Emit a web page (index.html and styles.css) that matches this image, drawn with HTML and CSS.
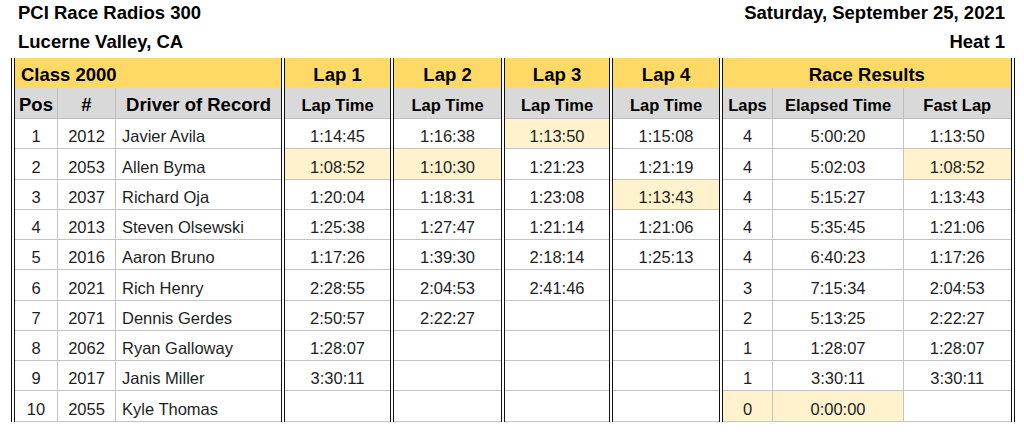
FILE: index.html
```html
<!DOCTYPE html>
<html lang="en">
<head>
<meta charset="utf-8">
<title>PCI Race Radios 300 - Heat 1</title>
<link rel="stylesheet" href="styles.css">
</head>
<body>
<header class="meta">
  <div class="meta-row"><span>PCI Race Radios 300</span><span>Saturday, September 25, 2021</span></div>
  <div class="meta-row second"><span>Lucerne Valley, CA</span><span>Heat 1</span></div>
</header>
<table class="results">
  <colgroup>
    <col class="c-pos"><col class="c-num"><col class="c-driver">
    <col class="c-lap1"><col class="c-lap2"><col class="c-lap3"><col class="c-lap4">
    <col class="c-laps"><col class="c-elapsed"><col class="c-fast">
  </colgroup>
  <thead>
    <tr class="group">
      <th colspan="3" class="left grp-end">Class 2000</th>
      <th class="grp-end">Lap 1</th>
      <th class="grp-end">Lap 2</th>
      <th class="grp-end">Lap 3</th>
      <th class="grp-end">Lap 4</th>
      <th colspan="3">Race Results</th>
    </tr>
    <tr class="sub">
      <th class="big">Pos</th>
      <th class="big">#</th>
      <th class="big grp-end">Driver of Record</th>
      <th class="grp-end">Lap Time</th>
      <th class="grp-end">Lap Time</th>
      <th class="grp-end">Lap Time</th>
      <th class="grp-end">Lap Time</th>
      <th>Laps</th>
      <th>Elapsed Time</th>
      <th>Fast Lap</th>
    </tr>
  </thead>
  <tbody>
    <tr><td>1</td><td>2012</td><td class="left grp-end">Javier Avila</td><td class="grp-end">1:14:45</td><td class="grp-end">1:16:38</td><td class="grp-end hl">1:13:50</td><td class="grp-end">1:15:08</td><td>4</td><td>5:00:20</td><td>1:13:50</td></tr>
    <tr><td>2</td><td>2053</td><td class="left grp-end">Allen Byma</td><td class="grp-end hl">1:08:52</td><td class="grp-end hl">1:10:30</td><td class="grp-end">1:21:23</td><td class="grp-end">1:21:19</td><td>4</td><td>5:02:03</td><td class="hl">1:08:52</td></tr>
    <tr><td>3</td><td>2037</td><td class="left grp-end">Richard Oja</td><td class="grp-end">1:20:04</td><td class="grp-end">1:18:31</td><td class="grp-end">1:23:08</td><td class="grp-end hl">1:13:43</td><td>4</td><td>5:15:27</td><td>1:13:43</td></tr>
    <tr><td>4</td><td>2013</td><td class="left grp-end">Steven Olsewski</td><td class="grp-end">1:25:38</td><td class="grp-end">1:27:47</td><td class="grp-end">1:21:14</td><td class="grp-end">1:21:06</td><td>4</td><td>5:35:45</td><td>1:21:06</td></tr>
    <tr><td>5</td><td>2016</td><td class="left grp-end">Aaron Bruno</td><td class="grp-end">1:17:26</td><td class="grp-end">1:39:30</td><td class="grp-end">2:18:14</td><td class="grp-end">1:25:13</td><td>4</td><td>6:40:23</td><td>1:17:26</td></tr>
    <tr><td>6</td><td>2021</td><td class="left grp-end">Rich Henry</td><td class="grp-end">2:28:55</td><td class="grp-end">2:04:53</td><td class="grp-end">2:41:46</td><td class="grp-end"></td><td>3</td><td>7:15:34</td><td>2:04:53</td></tr>
    <tr><td>7</td><td>2071</td><td class="left grp-end">Dennis Gerdes</td><td class="grp-end">2:50:57</td><td class="grp-end">2:22:27</td><td class="grp-end"></td><td class="grp-end"></td><td>2</td><td>5:13:25</td><td>2:22:27</td></tr>
    <tr><td>8</td><td>2062</td><td class="left grp-end">Ryan Galloway</td><td class="grp-end">1:28:07</td><td class="grp-end"></td><td class="grp-end"></td><td class="grp-end"></td><td>1</td><td>1:28:07</td><td>1:28:07</td></tr>
    <tr><td>9</td><td>2017</td><td class="left grp-end">Janis Miller</td><td class="grp-end">3:30:11</td><td class="grp-end"></td><td class="grp-end"></td><td class="grp-end"></td><td>1</td><td>3:30:11</td><td>3:30:11</td></tr>
    <tr><td>10</td><td>2055</td><td class="left grp-end">Kyle Thomas</td><td class="grp-end"></td><td class="grp-end"></td><td class="grp-end"></td><td class="grp-end"></td><td class="hl">0</td><td class="hl">0:00:00</td><td></td></tr>
  </tbody>
</table>
</body>
</html>
```

FILE: styles.css
```css
html, body {
  margin: 0;
  padding: 0;
  background: #ffffff;
}

body {
  font-family: "Liberation Sans", Arial, sans-serif;
  color: #000;
}

.meta {
  padding: 1px 19px 0 18px;
}

.meta-row {
  display: flex;
  justify-content: space-between;
  font-weight: bold;
  font-size: 18.5px;
  line-height: 24px;
}

.meta-row.second {
  margin-top: 5px;
}

.results {
  margin: 4px 0 0 11px;
  border-collapse: collapse;
  table-layout: fixed;
  width: 1003px;
  border-left: 4px double #111;
  border-right: 4px double #111;
  border-bottom: 1px solid #666;
}

.c-pos { width: 44.5px; }
.c-num { width: 58px; }
.c-driver { width: 167.5px; }
.c-lap1 { width: 109px; }
.c-lap2 { width: 111px; }
.c-lap3 { width: 108px; }
.c-lap4 { width: 110px; }
.c-laps { width: 51.5px; }
.c-elapsed { width: 131px; }
.c-fast { width: 109px; }

.results th,
.results td {
  padding: 0 4px 2px;
  vertical-align: bottom;
  text-align: center;
  white-space: nowrap;
  overflow: hidden;
  line-height: 20px;
}

.results .left {
  text-align: left;
  padding-left: 6px;
}

.results .grp-end {
  border-right: 4px double #111;
}

.group th {
  background: #ffd966;
  font-size: 18.5px;
  font-weight: bold;
  height: 27px;
  padding-bottom: 3px;
}

.sub th {
  background: #d9d9d9;
  font-size: 16.5px;
  font-weight: bold;
  height: 27px;
  padding-bottom: 3px;
  border-left: 1px solid #bcbcbc;
  border-bottom: 1px solid #bdbdbd;
}

.sub th.big {
  font-size: 18.5px;
}

.results td {
  font-size: 16.5px;
  color: #1e1e1e;
  height: 27.25px;
  padding-bottom: 2px;
  border-left: 1px solid #c4c4c4;
  border-bottom: 1px solid #c4c4c4;
}

.results td.hl {
  background: #fff2cc;
}
```
